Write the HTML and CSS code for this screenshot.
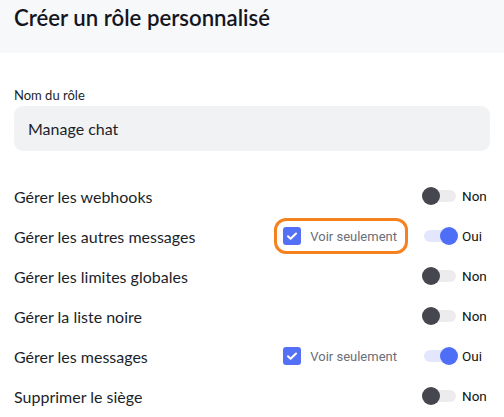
FILE: index.html
```html
<!DOCTYPE html>
<html lang="fr">
<head>
<meta charset="utf-8">
<link rel="stylesheet" href="styles.css">
</head>
<body>
<header class="header">
  <h1 class="title">Créer un rôle personnalisé</h1>
</header>
<main class="content">
  <label class="field-label">Nom du rôle</label>
  <div class="input">Manage chat</div>
  <ul class="perms">
    <li class="perm">
      <span class="perm-name">Gérer les webhooks</span>
      <span class="switch"><span class="track"></span><span class="knob"></span></span>
      <span class="state">Non</span>
    </li>
    <li class="perm">
      <span class="perm-name">Gérer les autres messages</span>
      <span class="check-group highlight">
        <span class="box"><svg viewBox="0 0 18 18" width="18" height="18"><path d="M5 9.3l2.6 2.5L13 6.5" fill="none" stroke="#fff" stroke-width="2" stroke-linecap="round" stroke-linejoin="round"/></svg></span>
        <span class="check-text">Voir seulement</span>
      </span>
      <span class="switch on"><span class="track"></span><span class="knob"></span></span>
      <span class="state">Oui</span>
    </li>
    <li class="perm">
      <span class="perm-name">Gérer les limites globales</span>
      <span class="switch"><span class="track"></span><span class="knob"></span></span>
      <span class="state">Non</span>
    </li>
    <li class="perm">
      <span class="perm-name">Gérer la liste noire</span>
      <span class="switch"><span class="track"></span><span class="knob"></span></span>
      <span class="state">Non</span>
    </li>
    <li class="perm">
      <span class="perm-name">Gérer les messages</span>
      <span class="check-group">
        <span class="box"><svg viewBox="0 0 18 18" width="18" height="18"><path d="M5 9.3l2.6 2.5L13 6.5" fill="none" stroke="#fff" stroke-width="2" stroke-linecap="round" stroke-linejoin="round"/></svg></span>
        <span class="check-text">Voir seulement</span>
      </span>
      <span class="switch on"><span class="track"></span><span class="knob"></span></span>
      <span class="state">Oui</span>
    </li>
    <li class="perm">
      <span class="perm-name">Supprimer le siège</span>
      <span class="switch"><span class="track"></span><span class="knob"></span></span>
      <span class="state">Non</span>
    </li>
  </ul>
</main>
</body>
</html>
```

FILE: styles.css
```css
* { box-sizing: border-box; }
html, body { margin: 0; padding: 0; background: #fff; overflow: hidden; }
body { font-family: "Lato", "Noto Sans", sans-serif; color: #1c1f2a; }

.header {
  background: #f7f8fa;
  height: 53px;
  padding: 4px 14px 0;
}
.title {
  margin: 0;
  font-size: 22.2px;
  font-weight: 600;
  line-height: 27px;
  color: #14161f;
}

.content {
  padding: 34px 14px 0;
}
.field-label {
  display: block;
  font-size: 13px;
  line-height: 16px;
  color: #1c1f2a;
}
.input {
  margin-top: 3px;
  height: 45px;
  background: #f1f2f4;
  border-radius: 9px;
  padding: 0 14px;
  display: flex;
  align-items: center;
  font-size: 16px;
  color: #1c1f2a;
}

.perms {
  list-style: none;
  margin: 25px 0 0;
  padding: 0;
}
.perm {
  height: 40px;
  display: flex;
  align-items: center;
}
.perm-name {
  flex: 1;
  font-size: 16px;
  color: #1c1f2a;
}

.check-group {
  display: flex;
  align-items: center;
  gap: 9px;
  height: 18px;
  padding: 0 2px 0 0;
  margin-right: 23px;
  border-radius: 3px;
}
.highlight {
  outline: 3px solid #f5821f;
  outline-offset: 6px;
}
.box {
  width: 18px;
  height: 18px;
  border-radius: 3px;
  background: #5470f5;
  display: flex;
}
.check-text {
  font-family: "Roboto", "Liberation Sans", sans-serif;
  font-size: 13px;
  color: #6a6e79;
}

.switch {
  position: relative;
  width: 34px;
  height: 18px;
}
.track {
  position: absolute;
  left: 0;
  right: 0;
  top: 3px;
  height: 12px;
  border-radius: 6px;
  background: #ececee;
}
.knob {
  position: absolute;
  top: 0;
  left: 0;
  width: 18px;
  height: 18px;
  border-radius: 50%;
  background: #45464f;
}
.switch.on .track { background: #e2e7fd; left: 2px; }
.switch.on .knob { left: auto; right: -2px; background: #4f6ef8; }

.state {
  width: 34px;
  padding-left: 6px;
  font-family: "Roboto", "Liberation Sans", sans-serif;
  font-size: 13.5px;
  color: #111;
}
```
